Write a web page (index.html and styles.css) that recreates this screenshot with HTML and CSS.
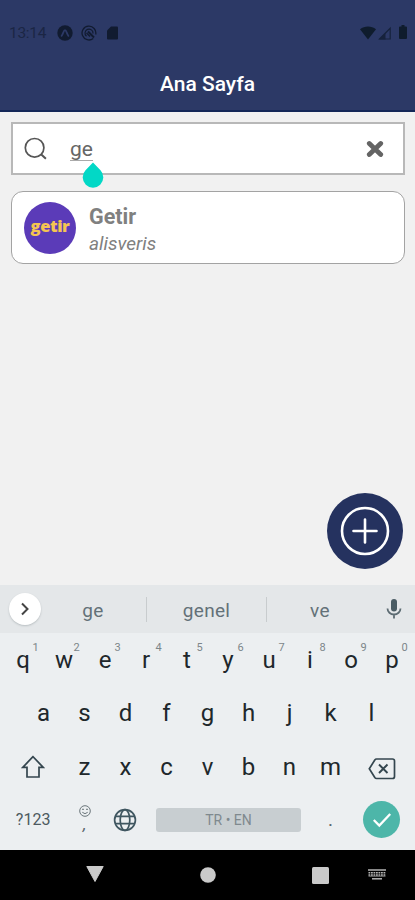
FILE: index.html
```html
<!DOCTYPE html>
<html lang="tr">
<head>
<meta charset="utf-8">
<meta name="viewport" content="width=device-width, initial-scale=1">
<title>Ana Sayfa</title>
<link rel="stylesheet" href="styles.css">
</head>
<body>
<div class="phone">
  <header class="header">
    <div class="status">
      <span class="clock">13:14</span>
      <svg class="st-app" width="16" height="16" viewBox="0 0 16 16"><circle cx="8" cy="8" r="7.7" fill="#111b30"/><path d="M4.6 10.8C6 9.5 6.6 5.2 8 5.2s2 4.3 3.4 5.6" fill="none" stroke="#2c3966" stroke-width="1.8" stroke-linecap="round"/></svg>
      <svg class="st-sync" width="16" height="16" viewBox="0 0 16 16" fill="none" stroke="#111b30"><path d="M12.200 13.500A6.900 6.900 0 1 1 14.700 9.500" stroke-width="1.300"/><path d="M5.500 11.200A4 4 0 1 1 12 8.500" stroke-width="1.200"/><path d="M7 6.500l6 6" stroke-width="2"/><path d="M5.500 8l3.500 3.500" stroke-width="1.300"/></svg>
      <svg class="st-sd" width="11" height="14" viewBox="0 0 11 14"><path d="M4 .5h6a1 1 0 0 1 1 1v11a1 1 0 0 1-1 1H1a1 1 0 0 1-1-1V4.5z" fill="#111b30"/></svg>
      <span class="spacer"></span>
      <svg width="16" height="14" viewBox="0 0 16 14"><path d="M0 3.300C4.500-.5 11.500-.5 16 3.300L8 13.500z" fill="#0f1c2d"/></svg>
      <svg class="st-cell" width="13" height="14" viewBox="0 0 13 14"><path d="M1.500 13L12.200 2.300V13z" fill="none" stroke="#16223c" stroke-width="1.200"/><path d="M1 13.500L7.500 7v6.500z" fill="#16223c"/></svg>
      <svg class="st-bat" width="8" height="15" viewBox="0 0 8 15"><path d="M2.500 0h3v1.500H7a1 1 0 0 1 1 1V13a1 1 0 0 1-1 1H1a1 1 0 0 1-1-1V2.500a1 1 0 0 1 1-1h1.500z" fill="#0f1c2d"/></svg>
    </div>
    <h1 class="title">Ana Sayfa</h1>
  </header>

  <main class="content">
    <div class="search">
      <svg class="search-icon" width="24" height="24" viewBox="0 0 24 24" fill="none" stroke="#555" stroke-width="1.700"><circle cx="10.600" cy="10.800" r="9.300"/><path d="M17.300 17.500l4.600 4.300" stroke-width="2"/></svg>
      <span class="query"><span class="typed">ge</span>
        <svg class="handle" width="22" height="26" viewBox="0 0 22 26"><path d="M11 .5l7.500 7.800a10.300 10.300 0 1 1-15 0z" fill="#02d8c6"/></svg>
      </span>
      <svg class="clear" width="18" height="18" viewBox="0 0 18 18"><path d="M3.300 3.500l11.400 11M14.700 3.500l-11.400 11" stroke="#646464" stroke-width="4.800" stroke-linecap="round"/></svg>
    </div>
    <article class="card">
      <div class="logo"><span>getir</span></div>
      <div class="card-text">
        <h2>Getir</h2>
        <p>alisveris</p>
      </div>
    </article>
    <div class="fab">
      <svg width="50" height="50" viewBox="0 0 50 50" fill="none" stroke="#fff" stroke-width="2.600" stroke-linecap="round"><circle cx="25" cy="25" r="23"/><path d="M25 13.500v23M13.500 25h23"/></svg>
    </div>
  </main>

  <section class="keyboard">
    <div class="suggest">
      <div class="expand"><svg width="10" height="14" viewBox="0 0 10 14"><path d="M2 1.500L7.500 7 2 12.500" fill="none" stroke="#444" stroke-width="2"/></svg></div>
      <span class="word w1">ge</span>
      <span class="word w2">genel</span>
      <span class="word w3">ve</span>
      <svg class="mic" width="16" height="20" viewBox="0 0 16 20"><rect x="5" y="0" width="6" height="12.500" rx="3" fill="#4a5c64"/><path d="M1.500 9.500a6.500 6 0 0 0 13 0M8 15.500V19.500" fill="none" stroke="#5d6c73" stroke-width="1.800"/></svg>
    </div>
    <div class="keys top">
      <span>q<sup>1</sup></span><span>w<sup>2</sup></span><span>e<sup>3</sup></span><span>r<sup>4</sup></span><span>t<sup>5</sup></span><span>y<sup>6</sup></span><span>u<sup>7</sup></span><span>i<sup>8</sup></span><span>o<sup>9</sup></span><span>p<sup>0</sup></span>
    </div>
    <div class="keys mid">
      <span>a</span><span>s</span><span>d</span><span>f</span><span>g</span><span>h</span><span>j</span><span>k</span><span>l</span>
    </div>
    <div class="keys low">
      <span><svg width="24" height="24" viewBox="0 0 24 24"><path d="M12 1.700L1.800 12.300H6V22h12v-9.700h4.200z" fill="none" stroke="#34464f" stroke-width="1.700"/></svg></span>
      <span>z</span><span>x</span><span>c</span><span>v</span><span>b</span><span>n</span><span>m</span>
      <span class="del"><svg width="28" height="22" viewBox="0 0 28 22" fill="none" stroke="#34464f"><path d="M8.500 1H24.500a2 2 0 0 1 2 2V18.500a2 2 0 0 1-2 2H8.500Q7.500 20.500 6.800 19.500L1.300 10.800 6.800 2Q7.500 1 8.500 1z" stroke-width="1.700"/><path d="M11 6.500l8.500 8.500M19.500 6.500L11 15" stroke-width="1.900"/></svg></span>
    </div>
    <div class="keys bottom">
      <span class="sym">?123</span>
      <span class="emoji"><svg width="12" height="12" viewBox="0 0 12 12" fill="none" stroke="#6b767b"><circle cx="6" cy="6" r="5.300"/><path d="M3.300 7.300q2.700 2.800 5.400 0" /><path d="M3 4.300h2M7 4.300h2"/></svg><i>,</i></span>
      <span class="globe"><svg width="24" height="24" viewBox="0 0 24 24" fill="none" stroke="#3f5660" stroke-width="1.700"><circle cx="12" cy="12" r="10.400"/><ellipse cx="12" cy="12" rx="4.800" ry="10.400"/><path d="M2.600 8.300h18.800M2.600 15.700h18.800"/></svg></span>
      <span class="space">TR • EN</span>
      <span class="dot">.</span>
      <span><b class="enter"><svg width="20" height="16" viewBox="0 0 20 16"><path d="M1.800 8l5.500 5.500L18.200 2" fill="none" stroke="#fff" stroke-width="2.300"/></svg></b></span>
    </div>
  </section>

  <nav class="nav">
    <svg class="back" width="18" height="16" viewBox="0 0 18 16"><path d="M.8 .5h16.400L9 15.500z" fill="#cacaca" stroke="#cacaca" stroke-linejoin="round"/></svg>
    <svg class="home" width="16" height="16" viewBox="0 0 16 16"><circle cx="8" cy="8" r="7.800" fill="#cacaca"/></svg>
    <svg class="recent" width="17" height="17" viewBox="0 0 17 17"><rect width="17" height="17" rx="1.500" fill="#cacaca"/></svg>
    <svg class="ime" width="18" height="12" viewBox="0 0 18 12" fill="none" stroke="#b5b5b5"><path d="M0 1h18" stroke-width="1.500"/><path d="M.5 3.700h17M.5 6h17" stroke-width="1.500" stroke-dasharray="1.800 .7"/><path d="M.5 7.200h17" stroke-width=".7"/><path d="M4 9.800h10" stroke-width="1.500"/></svg>
  </nav>
</div>
</body>
</html>
```
FILE: styles.css
```css
* { box-sizing: border-box; }
body { margin: 0; font-family: Roboto, sans-serif; }
svg { display: block; flex: none; }
h1, h2, p { margin: 0; }

.phone { width: 415px; height: 900px; display: flex; flex-direction: column; overflow: hidden; background: #f1f1f1; }

.header { height: 112px; background: #2c3966; border-bottom: 2px solid #142758; flex: none; }
.status { height: 56px; padding: 9px 8px 0 9px; display: flex; align-items: center; }
.clock { width: 48px; font-size: 15.500px; letter-spacing: -.3px; color: #1b2644; }
.st-sync { margin-left: 8px; }
.st-sd { margin-left: 10px; }
.spacer { flex: 1; }
.st-cell { margin-left: 2px; }
.st-bat { margin-left: 8px; }
.title { height: 56px; line-height: 56px; text-align: center; color: #fff; font-size: 21px; font-weight: 500; }

.content { flex: 1; padding: 10px 10px 16px 11px; display: flex; flex-direction: column; }
.search { height: 53px; border: 2px solid #b8b8b8; background: #fff; display: flex; align-items: center; padding: 0 19px 0 11px; }
.query { position: relative; margin-left: 22px; flex: 1; font-size: 21px; color: #666; }
.typed { border-bottom: 1px solid #aaa; display: inline-block; line-height: 21px; }
.handle { position: absolute; left: 12px; top: 25px; }
.card { height: 73px; margin-top: 16px; border: 1px solid #a3a3a3; border-radius: 12px; background: #fff; display: flex; align-items: center; padding-left: 12px; }
.logo { width: 52px; height: 52px; border-radius: 50%; background: #5b3bb8; display: flex; align-items: center; justify-content: center; color: #f5c451; font: 800 16.500px/20px "Open Sans", sans-serif; letter-spacing: -.4px; padding-bottom: 4px; }
.card-text { margin: 5px 0 0 13px; color: #808080; }
.card-text h2 { font-size: 21.500px; line-height: 26px; font-weight: 700; }
.card-text p { font-size: 19px; line-height: 27px; font-style: italic; }
.fab { width: 76px; height: 76px; margin: auto 2px 0 auto; border-radius: 50%; background: #25325f; display: flex; align-items: center; justify-content: center; }

.keyboard { height: 265px; flex: none; background: #eceff1; }
.suggest { height: 48px; background: #e4e7e9; display: grid; grid-template-columns: 40px 107px 120px 106px 42px; align-items: center; justify-items: center; }
.expand { width: 32px; height: 32px; margin-left: 10px; border-radius: 50%; background: #fff; box-shadow: 0 1px 2px #b9bfc2; display: flex; align-items: center; justify-content: center; }
.word { width: 100%; height: 25px; line-height: 28px; text-align: center; font-size: 19px; letter-spacing: .3px; color: #637178; }
.w1, .w2 { border-right: 1px solid #c8ccce; }
.keys { display: grid; padding: 0 2.500px; font-size: 24px; color: #20272b; }
.keys > span { display: flex; align-items: center; justify-content: center; position: relative; }
.top { grid-template-columns: repeat(10, 41px); height: 54px; }
.top sup { position: absolute; left: 30px; top: 9px; font-size: 11px; line-height: 12px; color: #7c868a; }
.mid { grid-template-columns: repeat(9, 41px); justify-content: center; height: 52px; }
.low { grid-template-columns: 61.500px repeat(7, 41px) 61.500px; height: 56px; }
.low .del { padding-top: 3px; }
.bottom { grid-template-columns: 61.500px 41px 41px 164px 41px 61.500px; height: 49px; align-items: center; }
.sym { font-size: 16px; letter-spacing: .1px; color: #4d5a60; }
.keys > .emoji { flex-direction: column; margin-top: -3px; }
.emoji i { font-size: 17px; line-height: 14px; color: #59656b; }
.keys > .globe { padding-right: 2px; }
.keys > .space { height: 24px; margin: 0 9px 0 10px; border-radius: 3px; background: #c8ced1; font-size: 14px; color: #7f898e; }
.dot { font-size: 19px; color: #59656b; }
.enter { width: 37px; height: 37px; border-radius: 50%; background: #4db6a9; display: flex; align-items: center; justify-content: center; }

.nav { height: 50px; flex: none; background: #000; display: grid; grid-template-columns: 86px 115px 111px 56px 47px; align-items: center; }
.back { grid-column: 2; margin-bottom: 3px; }
.home { grid-column: 3; margin-left: -1px; }
.recent { grid-column: 4; }
.ime { grid-column: 5; }
```
